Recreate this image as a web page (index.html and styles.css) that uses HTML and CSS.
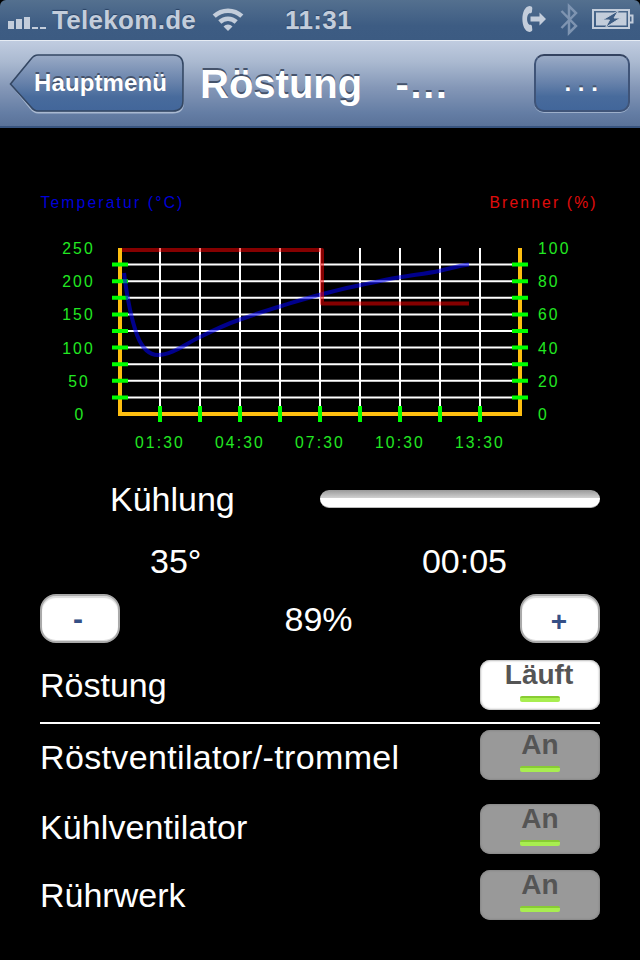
FILE: index.html
```html
<!DOCTYPE html>
<html lang="de">
<head>
<meta charset="utf-8">
<title>Röstung</title>
<link rel="stylesheet" href="styles.css">
</head>
<body>
<div class="status">
  <svg class="signal" width="40" height="40" viewBox="0 0 40 40"><path d="M2 21h6v8H2zM10 19h6v10h-6zM18 17h6v12h-6zM26 27h6v2h-6zM34 27h6v2h-6z"/></svg>
  <span class="carrier">Telekom.de</span>
  <svg class="wifi" width="32" height="40" viewBox="0 0 32 40"><path class="arc" d="M2.200 17.200a20 20 0 0 1 27.600 0M7.800 23a12 12 0 0 1 16.400 0"/><path d="M16 32l-4.500-4.500a6.300 6.300 0 0 1 9 0z"/></svg>
  <span class="clock">11:31</span>
  <svg class="phone" width="26" height="40" viewBox="0 0 26 40"><path d="M8.500 6c-9.500 1-9.500 25 0 26 1.600 0 3-1 2.800-2.500l-.4-3.500c-.2-1-1.200-1.500-2.600-1.300-3-2-3-9.400 0-11.400 1.400.2 2.400-.3 2.600-1.300l.4-3.500C11.500 7 10.100 6 8.500 6z"/><path d="M9.500 16.500H18.500V12.500l6.500 6.500-6.500 6.500v-4H9.500z"/></svg>
  <svg class="bluetooth" width="18" height="40" viewBox="0 0 18 40"><path d="M1.500 11L16 26l-7 7V6l7 7L1.500 28"/></svg>
  <svg class="battery" width="42" height="40" viewBox="0 0 42 40"><path class="case" d="M1 10h36v18H1zM38 15.500H40.500v7H38"/><path d="M4 12.500h30.500v13H4z"/><path class="bolt" d="M26.500 10.500L10.500 20h7L13.500 27.500 28.500 18h-6.500z"/></svg>
</div>
<div class="nav">
  <div class="back">
    <svg width="176" height="62" viewBox="0 0 176 62">
      <defs><linearGradient id="btn" x1="0" y1="0" x2="0" y2="1"><stop offset="0" stop-color="#9aabc6"/><stop offset=".5" stop-color="#6681aa"/><stop offset=".75" stop-color="#486b9c"/><stop offset="1" stop-color="#42669a"/></linearGradient></defs>
      <path class="glow" d="M29 2.500H164Q174 2.500 174 12.500V48.500Q174 58.500 164 58.500H29Q25 58.500 22 54.500L3 31 22 7Q25 2.500 29 2.500Z"/>
      <path class="shape" d="M29 1Q25 1 22 5L1.500 30 22 53Q25 57 29 57H164Q174 57 174 47V11Q174 1 164 1Z"/>
    </svg>
    <span>Hauptmenü</span>
  </div>
  <h1>Röstung&nbsp;&nbsp; -…</h1>
  <div class="more">...</div>
</div>
<svg class="chart" width="640" height="332" viewBox="0 128 640 332">
  <text class="t-temp" x="40.500" y="208">Temperatur (°C)</text>
  <text class="t-burn" x="489.500" y="208">Brenner (%)</text>
  <path class="grid" d="M122 264.600H518M122 281.200H518M122 297.800H518M122 314.400H518M122 331H518M122 347.600H518M122 364.200H518M122 380.800H518M122 397.400H518M160 248V412M200 248V412M240 248V412M280 248V412M320 248V412M360 248V412M400 248V412M440 248V412M480 248V412"/>
  <path class="axis" d="M120 248V414H520V248"/>
  <path class="tick" d="M112 264.600h16M112 281.200h16M112 297.800h16M112 314.400h16M112 331h16M112 347.600h16M112 364.200h16M112 380.800h16M112 397.400h16M512 264.600h16M512 281.200h16M512 297.800h16M512 314.400h16M512 331h16M512 347.600h16M512 364.200h16M512 380.800h16M512 397.400h16M160 406v16M200 406v16M240 406v16M280 406v16M320 406v16M360 406v16M400 406v16M440 406v16M480 406v16"/>
  <path class="temp" d="M124 273C127 297 131 318 137 335C142 348 149 355 158 355C172 355 185 344 200 337C214 330 227 324 240 319.500C253 315 266 310.500 280 306.500C293 302.500 306 298 320 294.700C333 291.500 346 288 360 285.300C373 282.500 386 279.500 400 277.300C413 275 427 273.500 440 270.700C450 268.500 460 265.500 469 264.500"/>
  <path class="burn" d="M122 250H322V303.500H469"/>
  <g class="lbl mid">
    <text x="78.500" y="254">250</text><text x="78.500" y="287">200</text><text x="78.500" y="320">150</text><text x="78.500" y="353.500">100</text><text x="79" y="387">50</text><text x="80" y="420">0</text>
    <text x="160" y="448">01:30</text><text x="240" y="448">04:30</text><text x="320" y="448">07:30</text><text x="400" y="448">10:30</text><text x="480" y="448">13:30</text>
  </g>
  <g class="lbl">
    <text x="538" y="254">100</text><text x="538" y="287">80</text><text x="538" y="320">60</text><text x="538" y="353.500">40</text><text x="538" y="387">20</text><text x="538" y="420">0</text>
  </g>
</svg>
<main>
  <div class="row phase"><span>Kühlung</span><div class="progress"></div></div>
  <div class="row values"><span>35°</span><span>00:05</span></div>
  <div class="row power"><div class="step minus">-</div><span>89%</span><div class="step plus">+</div></div>
  <div class="row roast"><span>Röstung</span><div class="toggle run">Läuft</div></div>
  <div class="row fan"><span>Röstventilator/-trommel</span><div class="toggle">An</div></div>
  <div class="row cooler"><span>Kühlventilator</span><div class="toggle">An</div></div>
  <div class="row stir"><span>Rührwerk</span><div class="toggle">An</div></div>
</main>
</body>
</html>
```
FILE: styles.css
```css
* { box-sizing: border-box; }
body {
  margin: 0;
  width: 640px;
  height: 960px;
  overflow: hidden;
  background: #000;
  color: #fff;
  font-family: "Liberation Sans", Arial, sans-serif;
}
.status {
  display: flex;
  height: 40px;
  padding-left: 6px;
  border-radius: 6px 6px 0 0;
  background: linear-gradient(#54708f, #3d5c83 65%, #3c5b82);
  color: #c3cddb;
  font: bold 26px/40px "Liberation Sans", Arial, sans-serif;
  text-shadow: 0 -1px 1px #2a4264;
}
.status svg { fill: #c3cddb; flex: none; }
.carrier { margin-left: 6px; width: 144px; letter-spacing: .3px; }
.wifi { margin-left: 16px; }
.wifi .arc { fill: none; stroke: #c3cddb; stroke-width: 4.500; }
.wifi { transform: translateY(-1px); }
.clock { margin-left: 41px; width: 67px; letter-spacing: .4px; }
.phone { margin-left: 169px; }
.status .bluetooth { margin-left: 13px; fill: none; stroke: #7e94b1; stroke-width: 2.500; }
.battery { margin-left: 14px; }
.status .case { fill: none; stroke: #c3cddb; stroke-width: 2; }
.status .bolt { fill: #3d5c83; stroke: #c3cddb; stroke-width: 1; }

.nav {
  display: flex;
  height: 88px;
  padding: 13px 9px 0;
  border-top: 1px solid #e6ecf4;
  border-bottom: 2px solid #38547f;
  background: linear-gradient(#c0cce0, #aab9d0 25%, #8497b7 55%, #647da4 85%, #5a7299);
  text-shadow: 0 -2px 0 #45536b;
}
.back { display: grid; width: 176px; }
.back > * { grid-area: 1 / 1; }
.back .shape { fill: url(#btn); stroke: #344763; stroke-width: 1.600; }
.back .glow { fill: none; stroke: #a9b9d1; stroke-width: 2; }
.back span { padding-left: 25px; font: bold 24px/58px "Liberation Sans", Arial, sans-serif; letter-spacing: .1px; }
h1 {
  width: 349px;
  margin: 0;
  padding-left: 15px;
  font: bold 40px/60px "Liberation Sans", Arial, sans-serif;
  white-space: nowrap;
}
.more {
  width: 96px;
  height: 58px;
  border: 2px solid #3f5478;
  border-top-color: #344360;
  border-radius: 10px;
  background: linear-gradient(#9aabc6, #6681aa 50%, #486b9c 75%, #42669a);
  box-shadow: 0 1px 0 #9dafca;
  text-align: center;
  font: bold 24px/54px "Liberation Sans", Arial, sans-serif;
  letter-spacing: 6.600px;
  padding-left: 5px;
}

.chart { display: block; }
.chart path { fill: none; }
.chart text { font-size: 15.700px; letter-spacing: 2.150px; }
.t-temp { fill: #0000d8; }
.t-burn { fill: #e00c0c; }
.lbl { fill: #22e822; }
.mid { text-anchor: middle; }
.grid { stroke: #fff; stroke-width: 2; }
.axis { stroke: #ffbf10; stroke-width: 4; }
.tick { stroke: #0f0; stroke-width: 4; }
.temp { stroke: rgba(0, 0, 255, .55); stroke-width: 4; }
.burn { stroke: rgba(255, 0, 0, .52); stroke-width: 4; stroke-linejoin: round; }

main { padding: 20px 40px 0; font-size: 34px; line-height: 40px; }
.row { display: flex; height: 50px; align-items: center; justify-content: space-between; }
.phase { height: 38px; padding-left: 70px; }
.progress {
  width: 280px;
  height: 18px;
  border-radius: 9px;
  border-bottom: 1px solid #bbb;
  background: linear-gradient(#999, #d4d4d4 50%, #fff 50%);
}
.values { height: 38px; margin-top: 24px; padding: 0 93px 0 110px; }
.power { margin-top: 13px; }
.power span { padding: 2px 3px 0 0; }
.step {
  width: 80px;
  height: 49px;
  border: 2px solid #aaa;
  border-radius: 16px;
  background: #fff;
  box-shadow: inset 0 -2px 0 -1px #ddd, inset 0 2px 1px #ddd;
  color: #354f86;
  text-align: center;
  font: bold 30px/46px "Liberation Sans", Arial, sans-serif;
}
.minus { padding-right: 4px; }
.plus { padding-right: 2px; font-size: 28px; line-height: 52px; }
.roast { margin-top: 17px; }
.fan {
  height: 58px;
  margin-top: 12px;
  padding-top: 6px;
  border-top: 2px solid #fff;
}
.fan span { padding-top: 4px; letter-spacing: .35px; }
.cooler { margin-top: 24px; }
.cooler span { padding-bottom: 4px; letter-spacing: .1px; }
.stir { margin-top: 16px; }
.toggle {
  display: flex;
  flex-direction: column;
  align-items: center;
  width: 120px;
  height: 50px;
  padding-top: 1px;
  border-radius: 10px;
  background: #999;
  box-shadow: inset 0 0 2px 1px #888;
  color: #555;
  font: bold 28px/28px "Liberation Sans", Arial, sans-serif;
}
.run { background: #fff; box-shadow: inset 0 0 2px 1px #bbb; padding-right: 2px; }
.toggle::after {
  content: "";
  width: 40px;
  height: 6px;
  margin-top: 7px;
  border-radius: 2px;
  background: linear-gradient(#8c3 33%, #a8ee50 33%);
}
.run::after { margin-left: 2px; }
```
